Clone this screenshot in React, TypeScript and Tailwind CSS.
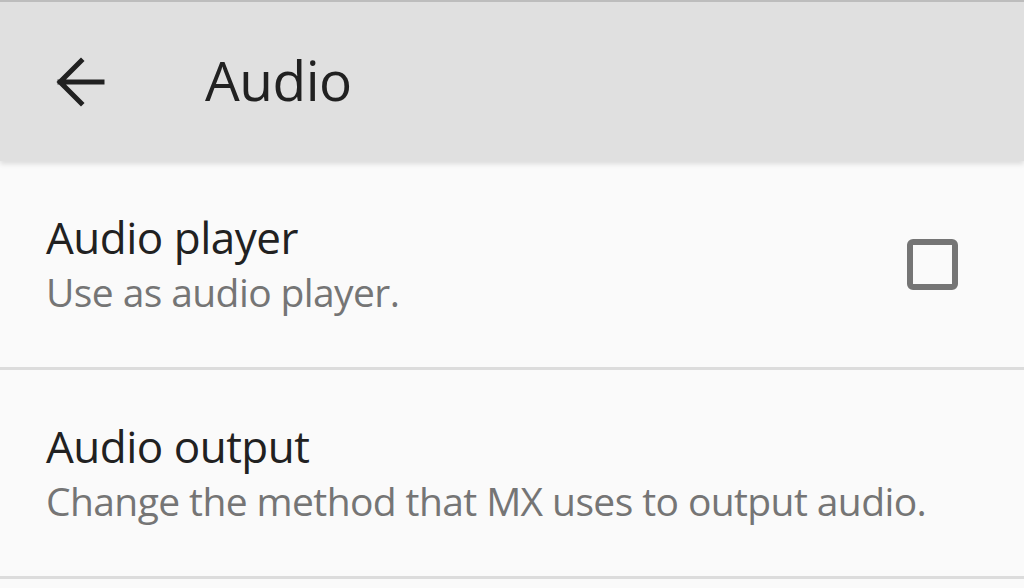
export default function App() {
  const font = { fontFamily: '"Open Sans", "Noto Sans", sans-serif' };
  return (
    <div className="w-[1024px] h-[588px] overflow-hidden bg-[#fafafa] flex flex-col" style={font}>
      {/* toolbar */}
      <div className="relative z-10 h-[161px] shrink-0 bg-[#e0e0e0] border-t-2 border-[#bdbdbd] shadow-[0_3px_5px_rgba(0,0,0,0.12)] flex items-center">
        <div className="w-[205px] shrink-0 flex items-center pl-[55px]">
          <svg width="50" height="50" viewBox="0 0 50 50" fill="none">
            <path d="M5 25H47M26 4L5 25L26 46" stroke="#212121" strokeWidth="5" strokeLinecap="square" />
          </svg>
        </div>
        <span className="text-[55px] tracking-[-0.5px] leading-none text-[#212121] pb-[4px]">Audio</span>
      </div>

      <SettingRow title="Audio player" subtitle="Use as audio player." checkbox />
      <SettingRow title="Audio output" subtitle="Change the method that MX uses to output audio." />
    </div>
  );
}

function SettingRow({ title, subtitle, checkbox }: { title: string; subtitle: string; checkbox?: boolean }) {
  return (
    <div className="h-[209px] shrink-0 flex items-center justify-between pl-[46px] pr-[66px] border-b-[3px] border-[#dcdcdc]">
      <div className="flex flex-col whitespace-nowrap">
        <span className="text-[44px] tracking-[-0.5px] leading-[56px] text-[#212121]">{title}</span>
        <span className="text-[39px] tracking-[-0.6px] leading-[54px] text-[#757575]">{subtitle}</span>
      </div>
      {checkbox && (
        <div className="w-[51px] h-[51px] shrink-0 rounded-[6px] border-[6px] border-[#757575]" />
      )}
    </div>
  );
}
